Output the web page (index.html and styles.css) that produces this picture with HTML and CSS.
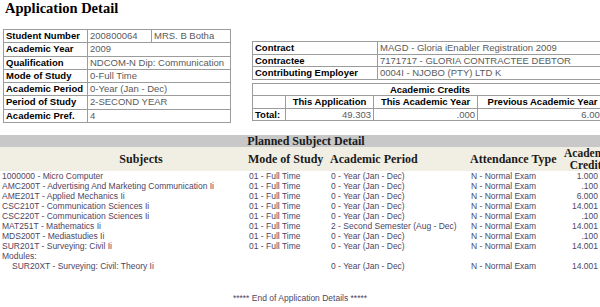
FILE: index.html
```html
<!DOCTYPE html>
<html>
<head>
<meta charset="utf-8">
<title>Application Detail</title>
<link rel="stylesheet" href="styles.css">
</head>
<body>
<h1 class="title">Application Detail</h1>
<div class="top">
  <table class="info">
    <colgroup><col class="c-lbl"><col class="c-v1"><col class="c-v2"></colgroup>
    <tr><td class="lbl">Student Number</td><td class="val">200800064</td><td class="val">MRS. B Botha</td></tr>
    <tr><td class="lbl">Academic Year</td><td class="val" colspan="2">2009</td></tr>
    <tr><td class="lbl">Qualification</td><td class="val" colspan="2">NDCOM-N Dip: Communication</td></tr>
    <tr><td class="lbl">Mode of Study</td><td class="val" colspan="2">0-Full Time</td></tr>
    <tr><td class="lbl">Academic Period</td><td class="val" colspan="2">0-Year (Jan - Dec)</td></tr>
    <tr><td class="lbl">Period of Study</td><td class="val" colspan="2">2-SECOND YEAR</td></tr>
    <tr><td class="lbl">Academic Pref.</td><td class="val" colspan="2">4</td></tr>
  </table>
  <div class="side">
    <table class="contract">
      <colgroup><col class="k-lbl"><col class="k-val"></colgroup>
      <tr><td class="lbl">Contract</td><td class="val">MAGD - Gloria iEnabler Registration 2009</td></tr>
      <tr><td class="lbl">Contractee</td><td class="val">7171717 - GLORIA CONTRACTEE DEBTOR</td></tr>
      <tr><td class="lbl">Contributing Employer</td><td class="val">0004I - NJOBO (PTY) LTD K</td></tr>
    </table>
    <table class="credits">
      <colgroup><col class="r1"><col class="r2"><col class="r3"><col class="r4"></colgroup>
      <tr><td class="lbl center" colspan="4">Academic Credits</td></tr>
      <tr><td></td><td class="lbl center">This Application</td><td class="lbl center">This Academic Year</td><td class="lbl center">Previous Academic Year</td></tr>
      <tr><td class="lbl">Total:</td><td class="val num">49.303</td><td class="val num">.000</td><td class="val num">6.000</td></tr>
    </table>
  </div>
</div>
<table class="subjects">
  <colgroup><col class="s1"><col class="s2"><col class="s3"><col class="s4"><col class="s5"></colgroup>
  <tr class="bar"><th colspan="5">Planned Subject Detail</th></tr>
  <tr class="heads">
    <th class="h-subj">Subjects</th>
    <th>Mode of Study</th>
    <th>Academic Period</th>
    <th>Attendance Type</th>
    <th class="h-cred">Academic<br>Credits</th>
  </tr>
  <tr><td>1000000 - Micro Computer</td><td>01 - Full Time</td><td>0 - Year (Jan - Dec)</td><td>N - Normal Exam</td><td class="cr">1.000</td></tr>
  <tr><td>AMC200T - Advertising And Marketing Communication Ii</td><td>01 - Full Time</td><td>0 - Year (Jan - Dec)</td><td>N - Normal Exam</td><td class="cr">.100</td></tr>
  <tr><td>AME201T - Applied Mechanics Ii</td><td>01 - Full Time</td><td>0 - Year (Jan - Dec)</td><td>N - Normal Exam</td><td class="cr">6.000</td></tr>
  <tr><td>CSC210T - Communication Sciences Ii</td><td>01 - Full Time</td><td>0 - Year (Jan - Dec)</td><td>N - Normal Exam</td><td class="cr">14.001</td></tr>
  <tr><td>CSC220T - Communication Sciences Ii</td><td>01 - Full Time</td><td>0 - Year (Jan - Dec)</td><td>N - Normal Exam</td><td class="cr">.100</td></tr>
  <tr><td>MAT251T - Mathematics Ii</td><td>01 - Full Time</td><td>2 - Second Semester (Aug - Dec)</td><td>N - Normal Exam</td><td class="cr">14.001</td></tr>
  <tr><td>MDS200T - Mediastudies Ii</td><td>01 - Full Time</td><td>0 - Year (Jan - Dec)</td><td>N - Normal Exam</td><td class="cr">.100</td></tr>
  <tr><td>SUR201T - Surveying: Civil Ii</td><td>01 - Full Time</td><td>0 - Year (Jan - Dec)</td><td>N - Normal Exam</td><td class="cr">14.001</td></tr>
  <tr><td colspan="5">Modules:</td></tr>
  <tr class="module"><td>SUR20XT - Surveying: Civil: Theory Ii</td><td></td><td>0 - Year (Jan - Dec)</td><td>N - Normal Exam</td><td class="cr">14.001</td></tr>
</table>
<p class="end">***** End of Application Details *****</p>
</body>
</html>
```
FILE: styles.css
```css
html, body {
  margin: 0;
  padding: 0;
  overflow: hidden;
  background: #ffffff;
}
body {
  width: 614px;
  font-family: "Liberation Sans", Arial, sans-serif;
  color: #000;
}
.title {
  margin: 0;
  padding-left: 5px;
  font: bold 14.5px/16px "Liberation Serif", "Times New Roman", serif;
}
.top {
  display: flex;
  align-items: flex-start;
  padding-left: 3px;
  margin-top: 13px;
}
table {
  border-collapse: collapse;
  border-spacing: 0;
}
.info, .contract, .credits {
  table-layout: fixed;
}
.info td, .contract td, .credits td {
  border: 1px solid #9c9c9c;
  font-size: 9.5px;
  padding: 0 2px;
  white-space: nowrap;
  overflow: hidden;
}
.info td { line-height: 12.3px; }
.contract td { line-height: 11.7px; }
.credits td { line-height: 11.3px; }
.info { width: 227px; }
.c-lbl { width: 84px; }
.c-v1 { width: 64px; }
.c-v2 { width: 79px; }
.lbl { font-weight: bold; color: #000; }
.val { color: #5a5a5a; }
.center { text-align: center; }
.num { text-align: right; padding-right: 1px; }
.side {
  margin-left: 21px;
  padding-top: 12px;
  width: 355px;
  flex: none;
}
.contract, .credits { width: 355px; }
.k-lbl { width: 125px; }
.k-val { width: 230px; }
.credits { margin-top: 3px; }
.r1 { width: 33px; }
.r2 { width: 88px; }
.r3 { width: 104px; }
.r4 { width: 130px; }

.subjects {
  width: 612px;
  margin-top: 12px;
  table-layout: fixed;
}
.s1 { width: 248px; }
.s2 { width: 82px; }
.s3 { width: 140px; }
.s4 { width: 94px; }
.s5 { width: 48px; }
.subjects th {
  font: bold 11.5px/12px "Liberation Serif", "Times New Roman", serif;
  color: #1a1a1a;
  padding: 0;
  white-space: nowrap;
}
.bar th {
  background: #c8c8c8;
  text-align: center;
  font-size: 12px;
}
.heads th {
  background: #f1eee3;
  text-align: left;
  vertical-align: middle;
  font-size: 12px;
}
.heads .h-subj { text-align: center; padding-left: 34px; }
.heads .h-cred { text-align: right; padding-right: 6px; font-size: 11.5px; }
.subjects td {
  font-size: 8.5px;
  line-height: 10px;
  color: #4f4563;
  padding: 0 0 0 1px;
  white-space: nowrap;
}
.subjects td:first-child { padding-left: 2px; }
.subjects .module td:first-child { padding-left: 12px; }
.subjects td.cr { text-align: right; padding-right: 14px; }
.end {
  width: 600px;
  margin: 22px 0 0;
  text-align: center;
  font-size: 8.5px;
  line-height: 10px;
  color: #4f4563;
}
```
